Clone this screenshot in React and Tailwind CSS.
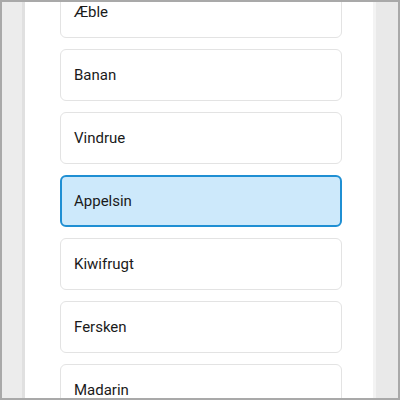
export default function App() {
  const items = ["Æble", "Banan", "Vindrue", "Appelsin", "Kiwifrugt", "Fersken", "Madarin"];
  const selected = "Appelsin";
  return (
    <div className="w-[400px] h-[400px] border-2 border-[#a9a9a9] flex overflow-hidden bg-white" style={{ fontFamily: "Roboto, 'Noto Sans', sans-serif" }}>
      <div className="w-[23px] shrink-0 bg-[#ececec] border-r-[3px] border-[#e0e0e0]" />
      <div className="flex-1 bg-white overflow-hidden">
        <div className="flex flex-col gap-[11px] mt-[-16px] pl-[35px] pr-[31px]">
          {items.map((it) =>
            it === selected ? (
              <div key={it} className="h-[52px] shrink-0 rounded-[6px] border-2 border-[#1f8fd3] bg-[#cde9fb] flex items-center pl-[12px] text-[15px] text-[#1a1a1a]">
                {it}
              </div>
            ) : (
              <div key={it} className="h-[52px] shrink-0 rounded-[6px] border border-[#e3e3e3] bg-white flex items-center pl-[13px] text-[15px] text-[#1a1a1a]">
                {it}
              </div>
            )
          )}
        </div>
      </div>
      <div className="w-[25px] shrink-0 bg-[#e9e9e9] border-l-[3px] border-[#f3f3f3]" />
    </div>
  );
}
